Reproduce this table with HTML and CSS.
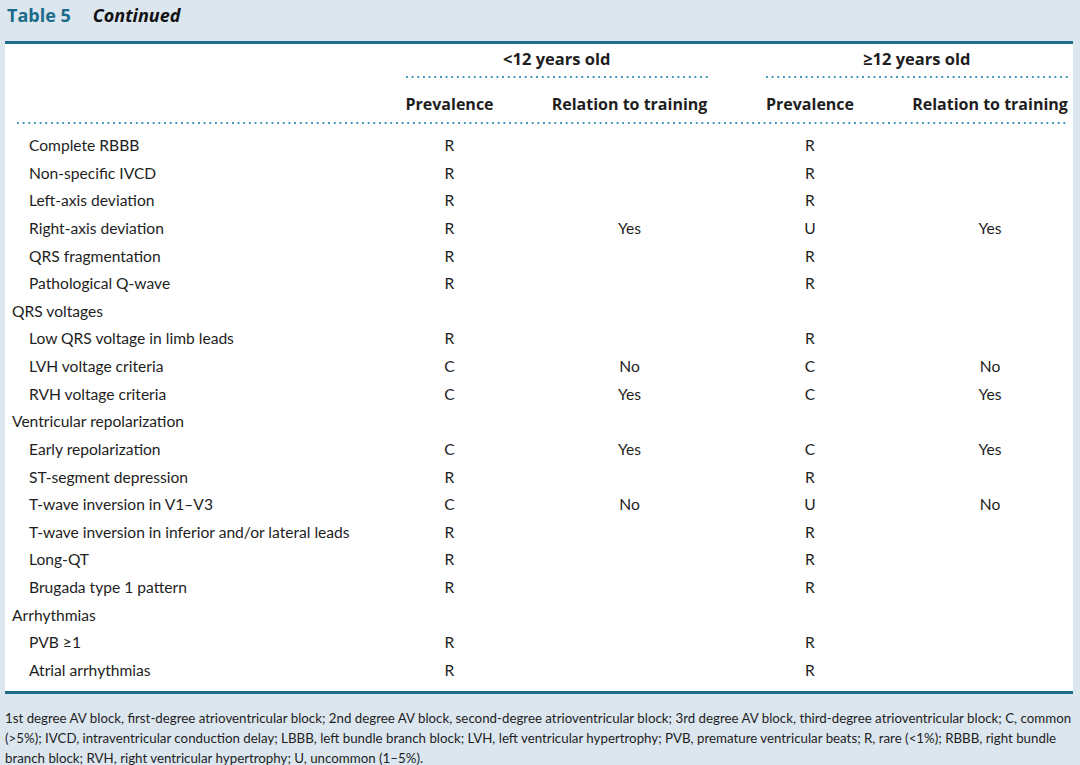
FILE: index.html
```html
<!DOCTYPE html>
<html lang="en">
<head>
<meta charset="utf-8">
<title>Table 5 Continued</title>
<link rel="stylesheet" href="styles.css">
</head>
<body>
<div class="title"><span class="t-num">Table 5</span><span class="t-cont">Continued</span></div>
<div class="panel">
  <div class="row head grp">
    <div></div>
    <div class="span2">&lt;12 years old</div>
    <div class="span2">&ge;12 years old</div>
  </div>
  <div class="row dotrow">
    <div></div>
    <div class="span2 dots"></div>
    <div class="span2 dots"></div>
  </div>
  <div class="row head sub">
    <div></div>
    <div>Prevalence</div>
    <div>Relation to training</div>
    <div>Prevalence</div>
    <div>Relation to training</div>
  </div>
  <div class="dots full"></div>
  <div class="body">
    <div class="row"><div class="l2">Complete RBBB</div><div>R</div><div></div><div>R</div><div></div></div>
    <div class="row"><div class="l2">Non-specific IVCD</div><div>R</div><div></div><div>R</div><div></div></div>
    <div class="row"><div class="l2">Left-axis deviation</div><div>R</div><div></div><div>R</div><div></div></div>
    <div class="row"><div class="l2">Right-axis deviation</div><div>R</div><div>Yes</div><div>U</div><div>Yes</div></div>
    <div class="row"><div class="l2">QRS fragmentation</div><div>R</div><div></div><div>R</div><div></div></div>
    <div class="row"><div class="l2">Pathological Q-wave</div><div>R</div><div></div><div>R</div><div></div></div>
    <div class="row"><div class="l1">QRS voltages</div><div></div><div></div><div></div><div></div></div>
    <div class="row"><div class="l2">Low QRS voltage in limb leads</div><div>R</div><div></div><div>R</div><div></div></div>
    <div class="row"><div class="l2">LVH voltage criteria</div><div>C</div><div>No</div><div>C</div><div>No</div></div>
    <div class="row"><div class="l2">RVH voltage criteria</div><div>C</div><div>Yes</div><div>C</div><div>Yes</div></div>
    <div class="row"><div class="l1">Ventricular repolarization</div><div></div><div></div><div></div><div></div></div>
    <div class="row"><div class="l2">Early repolarization</div><div>C</div><div>Yes</div><div>C</div><div>Yes</div></div>
    <div class="row"><div class="l2">ST-segment depression</div><div>R</div><div></div><div>R</div><div></div></div>
    <div class="row"><div class="l2">T-wave inversion in V1–V3</div><div>C</div><div>No</div><div>U</div><div>No</div></div>
    <div class="row"><div class="l2">T-wave inversion in inferior and/or lateral leads</div><div>R</div><div></div><div>R</div><div></div></div>
    <div class="row"><div class="l2">Long-QT</div><div>R</div><div></div><div>R</div><div></div></div>
    <div class="row"><div class="l2">Brugada type 1 pattern</div><div>R</div><div></div><div>R</div><div></div></div>
    <div class="row"><div class="l1">Arrhythmias</div><div></div><div></div><div></div><div></div></div>
    <div class="row"><div class="l2">PVB &ge;1</div><div>R</div><div></div><div>R</div><div></div></div>
    <div class="row"><div class="l2">Atrial arrhythmias</div><div>R</div><div></div><div>R</div><div></div></div>
  </div>
</div>
<p class="note">1st degree AV block, first-degree atrioventricular block; 2nd degree AV block, second-degree atrioventricular block; 3rd degree AV block, third-degree atrioventricular block; C, common (&gt;5%); IVCD, intraventricular conduction delay; LBBB, left bundle branch block; LVH, left ventricular hypertrophy; PVB, premature ventricular beats; R, rare (&lt;1%); RBBB, right bundle branch block; RVH, right ventricular hypertrophy; U, uncommon (1–5%).</p>
</body>
</html>
```
FILE: styles.css
```css
* { box-sizing: border-box; }
body {
  margin: 0;
  background: #dce6ef;
  font-family: Lato, "Open Sans", sans-serif;
  color: #1e1e1e;
}
.title {
  height: 41px;
  padding: 0 0 0 7px;
  display: flex;
  gap: 22px;
  font-family: "Open Sans", Lato, sans-serif;
  font-size: 18px;
  font-weight: 700;
  line-height: 30px;
}
.t-num { color: #1a6c8a; }
.t-cont { font-style: italic; color: #111; }
.panel {
  margin: 0 7px 0 5px;
  background: #fff;
  border-top: 3px solid #1b6d8b;
  border-bottom: 3px solid #1b6d8b;
  padding: 0 5px 6px 0;
}
.row {
  display: grid;
  grid-template-columns: minmax(0, 1fr) 88px 157px 89px 156px;
  column-gap: 57.5px;
  font-size: 15.6px;
  line-height: 27.63px;
  text-align: center;
}
.span2 { grid-column: span 2; }
.head {
  font-family: "Open Sans", Lato, sans-serif;
  font-size: 16px;
  font-weight: 700;
  line-height: 30px;
}
.grp { font-size: 16.5px; }
.dotrow { height: 2px; margin-top: 2px; }
.sub { margin-top: 11px; }
.dots {
  height: 2px;
  background-image: linear-gradient(to right, #3f93b9 0 1.7px, transparent 1.7px);
  background-size: 5.67px 2px;
}
.full { margin: 3px 0 0 12px; }
.body { margin-top: 8px; }
.l1, .l2 { text-align: left; white-space: nowrap; }
.l1 { padding-left: 7px; }
.l2 { padding-left: 24px; }
.note {
  margin: 14px 0 0;
  padding: 0 4px 0 5px;
  font-size: 13.3px;
  line-height: 20px;
}
```
